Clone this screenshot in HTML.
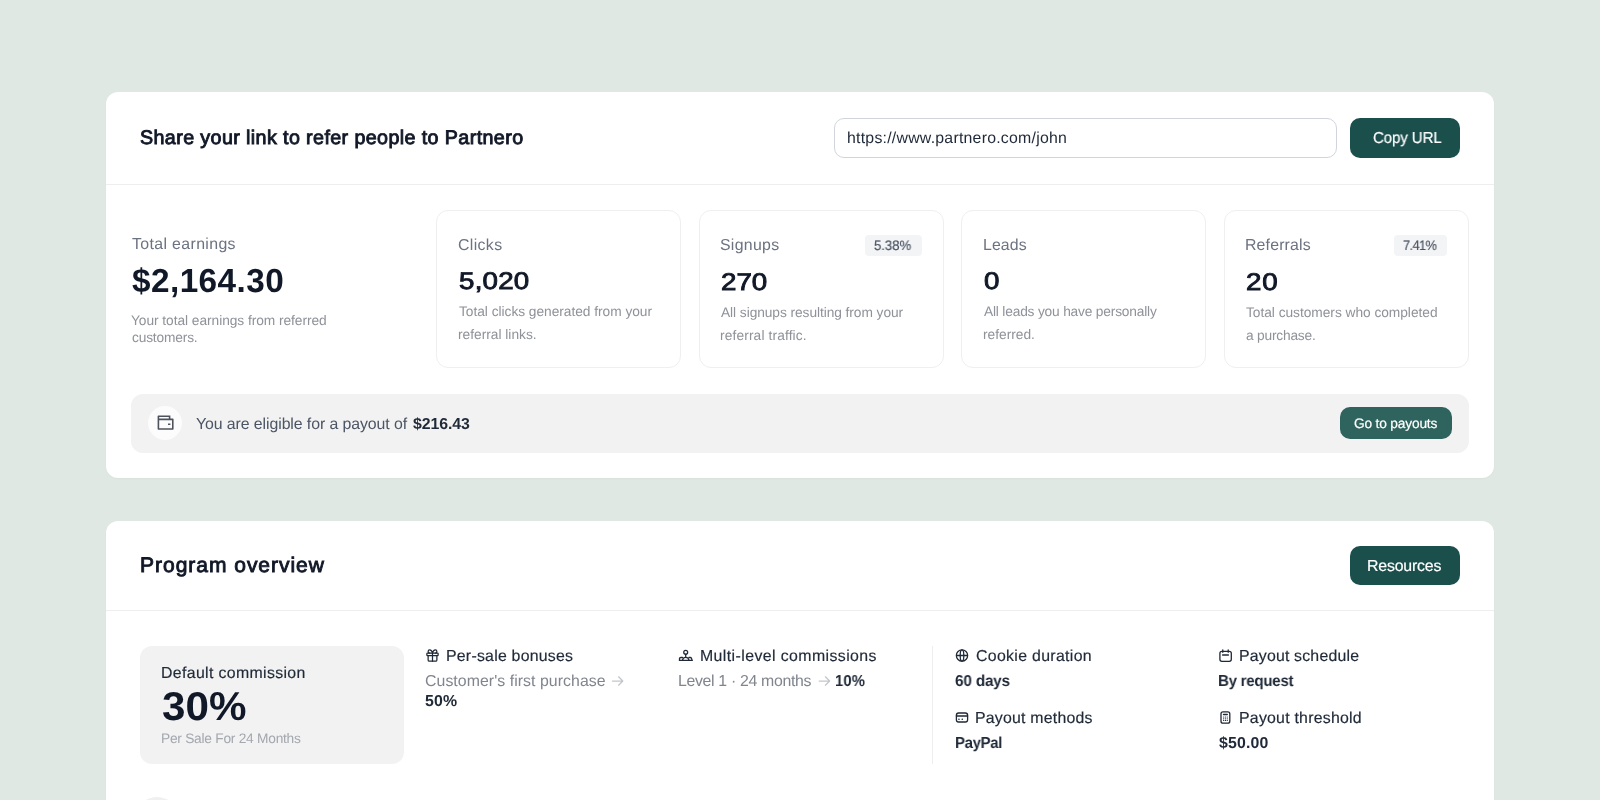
<!DOCTYPE html>
<html lang="en"><head><meta charset="utf-8"><title>Partnero</title><style>
html,body{margin:0;padding:0}body{width:1600px;height:800px;overflow:hidden;background:#dfe8e3;position:relative;font-family:"Liberation Sans", sans-serif}
.t{position:absolute;white-space:nowrap;line-height:1;margin:0;will-change:transform;text-rendering:geometricPrecision}
.b{position:absolute;box-sizing:border-box}
svg{position:absolute;overflow:visible}
</style></head><body>
<div class="b" style="left:106px;top:92px;width:1388px;height:386px;background:#fff;border-radius:12px;box-shadow:0 1px 2px rgba(0,0,0,.03)"></div>
<div class="b" style="left:106px;top:184px;width:1388px;height:1px;background:#eeeeef"></div>
<div class="b" style="left:834px;top:118px;width:503px;height:40px;border:1px solid #d1d5db;border-radius:10px;background:#fff"></div>
<div class="b" style="left:1350px;top:118px;width:110px;height:40px;border-radius:10px;background:#1a4f4c"></div>
<div class="b" style="left:436px;top:210px;width:245px;height:158px;border:1px solid #efeff0;border-radius:12px"></div>
<div class="b" style="left:699px;top:210px;width:245px;height:158px;border:1px solid #efeff0;border-radius:12px"></div>
<div class="b" style="left:961px;top:210px;width:245px;height:158px;border:1px solid #efeff0;border-radius:12px"></div>
<div class="b" style="left:1223.5px;top:210px;width:245px;height:158px;border:1px solid #efeff0;border-radius:12px"></div>
<div class="b" style="left:865px;top:234.5px;width:57px;height:21px;border-radius:4px;background:#f3f4f6"></div>
<div class="b" style="left:1394px;top:234.5px;width:52.5px;height:21px;border-radius:4px;background:#f3f4f6"></div>
<div class="b" style="left:131px;top:394px;width:1337.5px;height:59px;border-radius:12px;background:#f2f2f2"></div>
<div class="b" style="left:148px;top:406.3px;width:34px;height:34px;border-radius:50%;background:#fcfcfc"></div>
<svg style="left:155.7px;top:413.4px" width="19.2" height="19.2" viewBox="0 0 24 24"><path fill="#4d525b" d="M18 7h3a1 1 0 0 1 1 1v12a1 1 0 0 1-1 1H3a1 1 0 0 1-1-1V4a1 1 0 0 1 1-1h15v4zM4 9v10h16V9H4zm0-4v2h12V5H4zm11 8h3v2h-3v-2z"/></svg>
<div class="b" style="left:1340px;top:407px;width:112px;height:32px;border-radius:10px;background:#2f635d"></div>
<div class="b" style="left:106px;top:521px;width:1388px;height:300px;background:#fff;border-radius:12px 12px 0 0;box-shadow:0 1px 2px rgba(0,0,0,.03)"></div>
<div class="b" style="left:106px;top:610px;width:1388px;height:1px;background:#eeeeef"></div>
<div class="b" style="left:1350px;top:546px;width:110px;height:39px;border-radius:10px;background:#1a4f4c"></div>
<div class="b" style="left:140px;top:646px;width:264px;height:118px;border-radius:12px;background:#f2f2f2"></div>
<div class="b" style="left:932px;top:646px;width:1px;height:118px;background:#eeeeef"></div>
<div class="b" style="left:134.6px;top:797.2px;width:44px;height:44px;border-radius:50%;background:#f0f0f0"></div>
<svg style="left:425px;top:648.3px" width="15" height="15" viewBox="0 0 24 24" fill="none" stroke="#1f2937" stroke-width="2" stroke-linecap="round" stroke-linejoin="round"><rect x="3" y="8" width="18" height="4" rx="1"/><path d="M12 8v13"/><path d="M19 12v7a2 2 0 0 1-2 2H7a2 2 0 0 1-2-2v-7"/><path d="M7.5 8a2.5 2.5 0 0 1 0-5A4.8 8 0 0 1 12 8a4.8 8 0 0 1 4.500-5 2.5 2.5 0 0 1 0 5"/></svg>
<svg style="left:0;top:0" width="1600" height="800" viewBox="0 0 1600 800" fill="none" stroke="#1f2937" stroke-width="1.3" stroke-linecap="round" stroke-linejoin="round">
<circle cx="685.7" cy="652.3" r="1.95"/><path d="M685.7 654.3V656.4"/><path d="M679.5 660.4H692.1"/><path d="M679.5 660.4V658.4Q679.5 657.5 680.9 657.5H682.5"/><path d="M682.4 660.4A3.4 3.9 0 0 1 689 660.4"/><path d="M688.9 657.5H690.2Q691.2 657.5 691.5 658.4L692.1 660.4"/>
<circle cx="962" cy="655.5" r="5.65"/><path d="M956.8 655.5H967.2"/><ellipse cx="962" cy="655.5" rx="1.8" ry="5.65"/>
<rect x="1219.9" y="651.3" width="11.4" height="10" rx="2"/><path d="M1222.8 650V652.3M1228.2 650V652.3M1222.6 655H1228.4"/>
<rect x="956.4" y="713" width="11.2" height="9" rx="2.2"/><path d="M956.4 716H967.6"/><path d="M958.9 719.2H959M962.2 719.2H962.3" stroke-width="1.5"/>
<rect x="1221" y="711.8" width="8.8" height="11.4" rx="2"/><path d="M1223.5 714.5H1227.3"/><path d="M1223.6 717H1223.7M1225.4 717H1225.5M1227.2 717H1227.3M1223.6 718.7H1223.7M1225.4 718.7H1225.5M1227.2 718.7H1227.3M1223.6 720.4H1223.7M1225.4 720.4H1225.5M1227.2 720.4H1227.3" stroke-width="1.1"/>
<g stroke="#c3c6cb" stroke-width="1.25"><path d="M612.4 681H622.6M618.6 676.8L622.8 681L618.6 685.2"/><path d="M819.2 681H829.4M825.4 676.8L829.6 681L825.4 685.2"/></g>
</svg>

<h1 class="t" id="h1" style="left:140px;top:129.02px;font-size:19.7px;font-weight:400;color:#111827;letter-spacing:0.392px;-webkit-text-stroke:0.9px currentColor;">Share your link to refer people to Partnero</h1>
<div class="t" id="url" style="left:847px;top:130.77px;font-size:15.86px;font-weight:400;color:#1f2937;letter-spacing:0.233px;">https://www.partnero.com/john</div>
<div class="t" id="copy" style="left:1373px;top:130.77px;font-size:15.86px;font-weight:400;color:#ffffff;letter-spacing:-0.114px;-webkit-text-stroke:0.2px #fff;transform:scaleX(0.95);transform-origin:0 50%;">Copy URL</div>
<div class="t" id="te" style="left:132px;top:236.57px;font-size:15.86px;font-weight:400;color:#6b7280;letter-spacing:0.367px;">Total earnings</div>
<div class="t" id="tev" style="left:132px;top:265.41px;font-size:33.3px;font-weight:700;color:#111827;letter-spacing:0.452px;">$2,164.30</div>
<div class="t" id="ted1" style="left:131px;top:313.62px;font-size:13.74px;font-weight:400;color:#8f9299;letter-spacing:-0.047px;">Your total earnings from referred</div>
<div class="t" id="ted2" style="left:132px;top:331.37px;font-size:13.74px;font-weight:400;color:#8f9299;letter-spacing:-0.169px;">customers.</div>
<div class="t" id="c1l" style="left:458px;top:237.77px;font-size:15.86px;font-weight:400;color:#6b7280;letter-spacing:0.361px;">Clicks</div>
<div class="t" id="c1n" style="left:459px;top:269.60px;font-size:24.1px;font-weight:400;color:#111827;letter-spacing:0.190px;-webkit-text-stroke:0.9px currentColor;transform:scaleX(1.15);transform-origin:0 50%;">5,020</div>
<div class="t" id="c1d1" style="left:459px;top:304.62px;font-size:13.74px;font-weight:400;color:#8f9299;letter-spacing:-0.027px;">Total clicks generated from your</div>
<div class="t" id="c1d2" style="left:458px;top:327.87px;font-size:13.74px;font-weight:400;color:#8f9299;">referral links.</div>
<div class="t" id="c2l" style="left:720px;top:237.77px;font-size:15.86px;font-weight:400;color:#6b7280;letter-spacing:0.293px;">Signups</div>
<div class="t" id="c2n" style="left:721px;top:271.35px;font-size:24.1px;font-weight:400;color:#111827;letter-spacing:0.017px;-webkit-text-stroke:0.9px currentColor;transform:scaleX(1.15);transform-origin:0 50%;">270</div>
<div class="t" id="c2d1" style="left:721px;top:306.37px;font-size:13.74px;font-weight:400;color:#8f9299;letter-spacing:-0.062px;">All signups resulting from your</div>
<div class="t" id="c2d2" style="left:720px;top:329.37px;font-size:13.74px;font-weight:400;color:#8f9299;letter-spacing:0.132px;">referral traffic.</div>
<div class="t" id="c2b" style="left:874px;top:238.67px;font-size:13.74px;font-weight:400;color:#4b5563;letter-spacing:-0.060px;-webkit-text-stroke:0.18px currentColor;transform:scaleX(0.96);transform-origin:0 50%;">5.38%</div>
<div class="t" id="c3l" style="left:983px;top:237.77px;font-size:15.86px;font-weight:400;color:#6b7280;letter-spacing:0.110px;">Leads</div>
<div class="t" id="c3n" style="left:984px;top:269.60px;font-size:24.1px;font-weight:400;color:#111827;-webkit-text-stroke:0.9px currentColor;transform:scaleX(1.15);transform-origin:0 50%;">0</div>
<div class="t" id="c3d1" style="left:984px;top:304.62px;font-size:13.74px;font-weight:400;color:#8f9299;letter-spacing:-0.182px;">All leads you have personally</div>
<div class="t" id="c3d2" style="left:983px;top:327.87px;font-size:13.74px;font-weight:400;color:#8f9299;">referred.</div>
<div class="t" id="c4l" style="left:1245px;top:237.77px;font-size:15.86px;font-weight:400;color:#6b7280;letter-spacing:0.165px;">Referrals</div>
<div class="t" id="c4n" style="left:1246px;top:271.35px;font-size:24.1px;font-weight:400;color:#111827;letter-spacing:0.710px;-webkit-text-stroke:0.9px currentColor;transform:scaleX(1.15);transform-origin:0 50%;">20</div>
<div class="t" id="c4d1" style="left:1246px;top:306.37px;font-size:13.74px;font-weight:400;color:#8f9299;letter-spacing:-0.030px;">Total customers who completed</div>
<div class="t" id="c4d2" style="left:1246px;top:329.37px;font-size:13.74px;font-weight:400;color:#8f9299;letter-spacing:-0.198px;">a purchase.</div>
<div class="t" id="c4b" style="left:1403px;top:238.67px;font-size:13.74px;font-weight:400;color:#4b5563;letter-spacing:-0.643px;-webkit-text-stroke:0.18px currentColor;transform:scaleX(0.93);transform-origin:0 50%;">7.41%</div>
<div class="t" id="po1" style="left:196px;top:416.57px;font-size:15.86px;font-weight:400;color:#4b5563;letter-spacing:-0.083px;">You are eligible for a payout of</div>
<div class="t" id="po2" style="left:413px;top:416.57px;font-size:15.86px;font-weight:700;color:#1f2937;letter-spacing:-0.079px;">$216.43</div>
<div class="t" id="gtp" style="left:1354px;top:416.77px;font-size:13.74px;font-weight:400;color:#ffffff;letter-spacing:-0.179px;-webkit-text-stroke:0.2px #fff;">Go to payouts</div>
<h2 class="t" id="h2" style="left:140px;top:555.37px;font-size:21.0px;font-weight:400;color:#111827;letter-spacing:0.982px;-webkit-text-stroke:0.9px currentColor;">Program overview</h2>
<div class="t" id="res" style="left:1367px;top:559.17px;font-size:15.86px;font-weight:400;color:#ffffff;letter-spacing:-0.184px;-webkit-text-stroke:0.2px #fff;">Resources</div>
<div class="t" id="dc" style="left:161px;top:665.57px;font-size:15.86px;font-weight:400;color:#1f2937;letter-spacing:0.352px;-webkit-text-stroke:0.18px currentColor;">Default commission</div>
<div class="t" id="dcn" style="left:162px;top:686.67px;font-size:40.2px;font-weight:700;color:#111827;letter-spacing:0.044px;transform:scaleX(1.05);transform-origin:0 50%;">30%</div>
<div class="t" id="dcs" style="left:161px;top:731.97px;font-size:13.74px;font-weight:400;color:#a3a7ae;letter-spacing:-0.247px;">Per Sale For 24 Months</div>
<div class="t" id="psb" style="left:446px;top:649.07px;font-size:15.86px;font-weight:400;color:#1f2937;letter-spacing:0.236px;-webkit-text-stroke:0.18px currentColor;">Per-sale bonuses</div>
<div class="t" id="cfp" style="left:425px;top:673.97px;font-size:15.86px;font-weight:400;color:#80858e;letter-spacing:0.055px;">Customer's first purchase</div>
<div class="t" id="p50" style="left:425px;top:693.97px;font-size:15.86px;font-weight:700;color:#1f2937;letter-spacing:0.200px;">50%</div>
<div class="t" id="mlc" style="left:700px;top:649.07px;font-size:15.86px;font-weight:400;color:#1f2937;letter-spacing:0.411px;-webkit-text-stroke:0.18px currentColor;">Multi-level commissions</div>
<div class="t" id="lv1" style="left:678px;top:673.97px;font-size:15.86px;font-weight:400;color:#80858e;letter-spacing:-0.326px;">Level 1 · 24 months</div>
<div class="t" id="p10" style="left:835px;top:673.97px;font-size:15.86px;font-weight:700;color:#1f2937;letter-spacing:0.151px;transform:scaleX(0.93);transform-origin:0 50%;">10%</div>
<div class="t" id="cd" style="left:976px;top:649.07px;font-size:15.86px;font-weight:400;color:#1f2937;letter-spacing:0.325px;-webkit-text-stroke:0.18px currentColor;">Cookie duration</div>
<div class="t" id="d60" style="left:955px;top:674.17px;font-size:15.86px;font-weight:700;color:#1f2937;letter-spacing:-0.139px;transform:scaleX(0.96);transform-origin:0 50%;">60 days</div>
<div class="t" id="pm" style="left:975px;top:711.07px;font-size:15.86px;font-weight:400;color:#1f2937;letter-spacing:0.216px;-webkit-text-stroke:0.18px currentColor;">Payout methods</div>
<div class="t" id="pp" style="left:955px;top:735.97px;font-size:15.86px;font-weight:700;color:#1f2937;letter-spacing:-0.325px;transform:scaleX(0.94);transform-origin:0 50%;">PayPal</div>
<div class="t" id="ps" style="left:1239px;top:649.07px;font-size:15.86px;font-weight:400;color:#1f2937;letter-spacing:0.192px;-webkit-text-stroke:0.18px currentColor;">Payout schedule</div>
<div class="t" id="br" style="left:1218px;top:674.17px;font-size:15.86px;font-weight:700;color:#1f2937;letter-spacing:-0.276px;transform:scaleX(0.95);transform-origin:0 50%;">By request</div>
<div class="t" id="pt" style="left:1239px;top:711.07px;font-size:15.86px;font-weight:400;color:#1f2937;letter-spacing:0.240px;-webkit-text-stroke:0.18px currentColor;">Payout threshold</div>
<div class="t" id="d50" style="left:1219px;top:735.97px;font-size:15.86px;font-weight:700;color:#1f2937;letter-spacing:0.181px;">$50.00</div>
</body></html>
